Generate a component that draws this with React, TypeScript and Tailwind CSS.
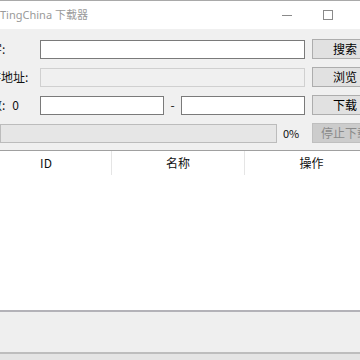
// TingChina downloader window, cropped at the left edge like the original capture.
const ui = "font-['Microsoft_YaHei','Noto_Sans_CJK_SC','Noto_Sans',sans-serif]";

function Button({ label, disabled }: { label: string; disabled?: boolean }) {
  return (
    <div
      className={`flex h-[20px] w-[66px] shrink-0 items-center justify-center border text-[12px] ${
        disabled
          ? "border-[#bfbfbf] bg-[#cccccc] text-[#8a8a8a]"
          : "border-[#adadad] bg-[#e1e1e1] text-black"
      }`}
    >
      {label}
    </div>
  );
}

function Field({ width, disabled }: { width: string; disabled?: boolean }) {
  return (
    <div
      className={`h-[19px] shrink-0 border ${width} ${
        disabled ? "border-[#d0d0d0] bg-[#f0f0f0]" : "border-[#7a7a7a] bg-white"
      }`}
    />
  );
}

function Label({ text, shift, after }: { text: string; shift: string; after?: string }) {
  return (
    <div className="flex h-[19px] w-[40px] shrink-0 items-center overflow-hidden">
      <span className={`whitespace-nowrap text-[12px] text-[#111] ${shift}`}>{text}</span>
      {after && <span className="ml-[7px] text-[12px] text-[#111]">{after}</span>}
    </div>
  );
}

export default function App() {
  return (
    <div className={`relative flex h-[360px] w-[360px] flex-col overflow-hidden bg-[#f0f0f0] ${ui}`}>
      {/* title bar */}
      <div className="flex h-[29px] shrink-0 items-center border-t border-[#a9a9a9] bg-white">
        <span className="font-['Noto_Sans','Noto_Sans_CJK_SC',sans-serif] text-[11px] text-[#9a9a9a]">
          TingChina 下载器
        </span>
        <div className="ml-auto flex items-center">
          <span className="h-px w-[10px] bg-[#8a8a8a]" />
          <span className="ml-[31px] mr-[27px] h-[10px] w-[10px] border border-[#8a8a8a]" />
        </div>
      </div>

      {/* form rows */}
      <div className="flex flex-col gap-[8px] pt-[10px]">
        <div className="flex items-center">
          <Label text="关键字:" shift="-ml-[34px]" />
          <Field width="w-[265px]" />
          <div className="ml-[7px]">
            <Button label="搜索" />
          </div>
        </div>
        <div className="flex items-center">
          <Label text="保存地址:" shift="-ml-[23px]" />
          <Field width="w-[265px]" disabled />
          <div className="ml-[7px]">
            <Button label="浏览" />
          </div>
        </div>
        <div className="flex items-center">
          <Label text="页数:" shift="-ml-[22px]" after="0" />
          <Field width="w-[124px]" />
          <span className="w-[17px] shrink-0 text-center text-[12px] text-[#111]">-</span>
          <Field width="w-[124px]" />
          <div className="ml-[7px]">
            <Button label="下载" />
          </div>
        </div>
        <div className="flex items-center">
          <div className="h-[19px] w-[277px] shrink-0 border border-[#bcbcbc] bg-[#e6e6e6]" />
          <span className="w-[35px] shrink-0 pl-[6px] text-[11px] text-[#111]">0%</span>
          <Button label="停止下载" disabled />
        </div>
      </div>

      {/* list */}
      <div className="mt-[7px] flex flex-1 flex-col border-t border-[#a0a0a0] bg-white">
        <div className="-ml-[19px] grid h-[24px] grid-cols-[131px_133px_133px] text-[12px] text-[#111]">
          <div className="flex items-center justify-center border-r border-[#e5e5e5]">ID</div>
          <div className="flex items-center justify-center border-r border-[#e5e5e5]">名称</div>
          <div className="flex items-center justify-center">操作</div>
        </div>
      </div>

      {/* status strip */}
      <div className="h-[44px] shrink-0 border-t-2 border-b-2 border-t-[#b3b2b8] border-b-[#bdbdbd] bg-[#efefef]" />
      <div className="h-[6px] shrink-0 bg-[#e4e4e4]" />
    </div>
  );
}
